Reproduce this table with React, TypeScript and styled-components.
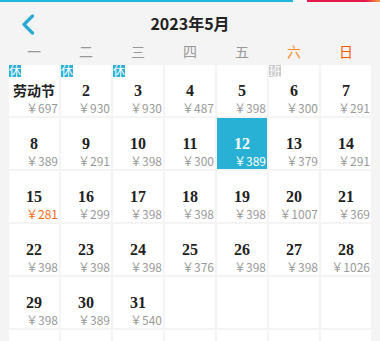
import React from 'react';
import styled, { createGlobalStyle } from 'styled-components';

type Day = {
  label?: string;
  price?: string;
  tag?: '休' | '班';
  cheap?: boolean;
  active?: boolean;
};

const days: Day[] = [
  { label: '劳动节', price: '697', tag: '休' },
  { label: '2', price: '930', tag: '休' },
  { label: '3', price: '930', tag: '休' },
  { label: '4', price: '487' },
  { label: '5', price: '398' },
  { label: '6', price: '300', tag: '班' },
  { label: '7', price: '291' },
  { label: '8', price: '389' },
  { label: '9', price: '291' },
  { label: '10', price: '398' },
  { label: '11', price: '300' },
  { label: '12', price: '389', active: true },
  { label: '13', price: '379' },
  { label: '14', price: '291' },
  { label: '15', price: '281', cheap: true },
  { label: '16', price: '299' },
  { label: '17', price: '398' },
  { label: '18', price: '398' },
  { label: '19', price: '398' },
  { label: '20', price: '1007' },
  { label: '21', price: '369' },
  { label: '22', price: '398' },
  { label: '23', price: '398' },
  { label: '24', price: '398' },
  { label: '25', price: '376' },
  { label: '26', price: '398' },
  { label: '27', price: '398' },
  { label: '28', price: '1026' },
  { label: '29', price: '398' },
  { label: '30', price: '389' },
  { label: '31', price: '540' },
];

// pad out to six full weeks
while (days.length < 42) days.push({});

const weekdays = ['一', '二', '三', '四', '五', '六', '日'];

const GlobalStyle = createGlobalStyle`
  html, body {
    margin: 0;
    padding: 0;
    background: #f4f4f4;
    font-family: "Noto Sans CJK SC", "Noto Sans", sans-serif;
  }
`;

const Page = styled.div`
  width: 380px;
  height: 341px;
  overflow: hidden;
  background: #f4f4f4;
`;

const TopStrip = styled.div`
  height: 2px;
  background: linear-gradient(
    to right,
    #22b4d8 0,
    #22b4d8 293px,
    #f7f7f7 293px,
    #f7f7f7 307px,
    #e8184c 307px,
    #e8184c 366px,
    #f7a23a 380px
  );
`;

const Header = styled.div`
  position: relative;
  height: 40px;
  display: flex;
  align-items: center;
  justify-content: center;
`;

const Back = styled.button`
  position: absolute;
  left: 18px;
  top: 10px;
  width: 20px;
  height: 24px;
  padding: 0;
  border: 0;
  background: none;
  display: flex;
  align-items: center;
  justify-content: center;
`;

const Title = styled.h1`
  margin: 0;
  font-size: 16px;
  line-height: 20px;
  font-weight: 700;
  color: #222;
  transform: translateY(1px);
`;

const Weeks = styled.div`
  display: grid;
  grid-template-columns: repeat(7, 50px);
  column-gap: 2px;
  padding: 1px 9px 0;
  height: 21px;
  box-sizing: border-box;
`;

const WeekName = styled.span<{ $tone?: string }>`
  text-align: center;
  font-size: 14px;
  line-height: 16px;
  color: ${(p) => p.$tone || '#999'};
`;

const Grid = styled.div`
  display: grid;
  grid-template-columns: repeat(7, 50px);
  grid-auto-rows: 51px;
  gap: 2px;
  padding: 2px 9px 0;
`;

const Cell = styled.div<{ $active?: boolean }>`
  position: relative;
  background: ${(p) => (p.$active ? '#29b1d5' : '#fff')};
  display: flex;
  flex-direction: column;
  padding-top: 16px;
  box-sizing: border-box;
`;

const Num = styled.div<{ $active?: boolean; $text?: boolean }>`
  text-align: center;
  height: 19px;
  line-height: 19px;
  font-family: ${(p) =>
    p.$text ? '"Noto Sans CJK SC", sans-serif' : '"Liberation Serif", "DejaVu Serif", serif'};
  font-size: ${(p) => (p.$text ? '14px' : '16px')};
  font-weight: 700;
  color: ${(p) => (p.$active ? '#fff' : '#222')};
`;

const Price = styled.div<{ $active?: boolean; $cheap?: boolean }>`
  text-align: right;
  padding-right: 1px;
  font-size: 12px;
  line-height: 14px;
  margin-top: 1px;
  color: ${(p) => (p.$active ? '#fff' : p.$cheap ? '#ff6a0f' : '#9a9a9a')};
`;

const Tag = styled.span<{ $work?: boolean }>`
  position: absolute;
  left: 0;
  top: 0;
  width: 12px;
  height: 12px;
  font-size: 12px;
  line-height: 12px;
  text-align: center;
  color: #fff;
  background: ${(p) => (p.$work ? '#c9c9c9' : '#29b1d5')};
`;

export default function App() {
  return (
    <Page>
      <GlobalStyle />
      <TopStrip />
      <Header>
        <Back aria-label="返回">
          <svg width="14" height="21" viewBox="0 0 14 21">
            <path
              d="M11.5 2 L3 10.5 L11.5 19"
              fill="none"
              stroke="#29abd3"
              strokeWidth="3.2"
              strokeLinecap="round"
              strokeLinejoin="round"
            />
          </svg>
        </Back>
        <Title>2023年5月</Title>
      </Header>
      <Weeks>
        {weekdays.map((w, i) => (
          <WeekName key={w} $tone={i === 5 ? '#ff8a2a' : i === 6 ? '#ff5a00' : undefined}>
            {w}
          </WeekName>
        ))}
      </Weeks>
      <Grid>
        {days.map((d, i) => (
          <Cell key={i} $active={d.active}>
            {d.tag && <Tag $work={d.tag === '班'}>{d.tag}</Tag>}
            {d.label && (
              <>
                <Num $active={d.active} $text={d.label.length > 2}>
                  {d.label}
                </Num>
                <Price $active={d.active} $cheap={d.cheap}>
                  ￥{d.price}
                </Price>
              </>
            )}
          </Cell>
        ))}
      </Grid>
    </Page>
  );
}
